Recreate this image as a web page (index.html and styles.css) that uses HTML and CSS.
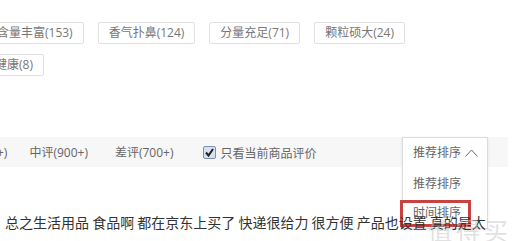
FILE: index.html
```html
<!DOCTYPE html>
<html>
<head>
<meta charset="utf-8">
<link rel="stylesheet" href="styles.css">
</head>
<body>
<div class="page">
  <div class="tags">
    <div class="tag-row row1">
      <span class="tag">含量丰富(153)</span>
      <span class="tag">香气扑鼻(124)</span>
      <span class="tag">分量充足(71)</span>
      <span class="tag">颗粒硕大(24)</span>
    </div>
    <div class="tag-row row2">
      <span class="tag">健康(8)</span>
    </div>
  </div>

  <div class="filter-bar">
    <span class="f-item first">+)</span>
    <span class="f-item mid">中评(900+)</span>
    <span class="f-item">差评(700+)</span>
    <label class="f-check">
      <span class="cbox"><svg width="11" height="11" viewBox="0 0 11 11"><path d="M2 5.5 L4.5 8.5 L9 2" fill="none" stroke="#222" stroke-width="2"/></svg></span>
      <span class="f-check-text">只看当前商品评价</span>
    </label>
  </div>

  <div class="dropdown">
    <div class="dd-head">推荐排序<svg class="caret" width="13" height="8" viewBox="0 0 13 8"><polyline points="0.5,7.5 6.5,1 12.5,7.5" fill="none" stroke="#666" stroke-width="1"/></svg></div>
    <div class="dd-item">推荐排序</div>
    <div class="dd-item second">时间排序</div>
  </div>
  <div class="highlight"></div>

  <p class="comment">总之生活用品 食品啊 都在京东上买了 快递很给力 很方便 产品也设置 真的是太</p>
  <div class="watermark">值得买</div>
</div>
</body>
</html>
```
FILE: styles.css
```css
html, body {
  margin: 0;
  padding: 0;
  background: #fff;
  overflow: hidden;
}
.page {
  position: relative;
  width: 514px;
  height: 241px;
  overflow: hidden;
  font-family: "Open Sans", "Noto Sans CJK SC", sans-serif;
  color: #666;
}
.tags {
  padding-top: 22px;
}
.tag-row {
  display: flex;
  gap: 14px;
}
.row1 {
  margin-left: -14px;
}
.row2 {
  margin-left: -16px;
  margin-top: 10px;
}
.tag {
  display: inline-block;
  height: 20px;
  line-height: 20px;
  padding: 0 10px;
  border: 1px solid #e1e1e1;
  border-radius: 2px;
  font-size: 12px;
  color: #777;
  white-space: nowrap;
}
.filter-bar {
  margin-top: 61px;
  width: 508px;
  height: 30px;
  background: #f7f7f7;
  display: flex;
  align-items: center;
  font-size: 12px;
  color: #666;
}
.f-item {
  white-space: nowrap;
  margin-right: 30px;
}
.f-item.first {
  margin-left: -3px;
  margin-right: 22px;
}
.f-item.mid {
  margin-right: 27px;
}
.f-check {
  display: flex;
  align-items: center;
  font-family: "Noto Sans CJK SC", sans-serif;
}
.cbox {
  width: 11px;
  height: 11px;
  border: 1px solid #7d8fae;
  border-radius: 2px;
  background: #d9e1ee;
  display: flex;
  align-items: center;
  justify-content: center;
  margin-right: 4px;
}
.dropdown {
  position: absolute;
  left: 402px;
  top: 137px;
  width: 84px;
  height: 90px;
  background: #fff;
  border: 1px solid #dcdcdc;
  box-shadow: 0 1px 3px rgba(0,0,0,0.08);
  font-size: 12px;
  color: #666;
}
.dd-head {
  height: 30px;
  line-height: 30px;
  padding-left: 10px;
  display: flex;
  align-items: center;
}
.caret {
  margin-left: 4px;
}
.dd-item {
  height: 32px;
  line-height: 32px;
  padding-left: 10px;
}
.dd-item.second {
  height: 26px;
  line-height: 26px;
}
.highlight {
  position: absolute;
  left: 400px;
  top: 200px;
  width: 65px;
  height: 21px;
  border: 3px solid #c8423f;
}
.comment {
  position: relative;
  z-index: 2;
  margin: 0;
  margin-top: 45px;
  padding-left: 5px;
  font-size: 14px;
  line-height: 20px;
  color: #333;
  white-space: nowrap;
  font-family: "Noto Sans CJK SC", sans-serif;
}
.watermark {
  position: absolute;
  z-index: 3;
  left: 428px;
  top: 212px;
  font-size: 24px;
  letter-spacing: 4px;
  color: rgba(200,200,200,0.55);
  white-space: nowrap;
  font-family: "Noto Sans CJK SC", sans-serif;
}
```
